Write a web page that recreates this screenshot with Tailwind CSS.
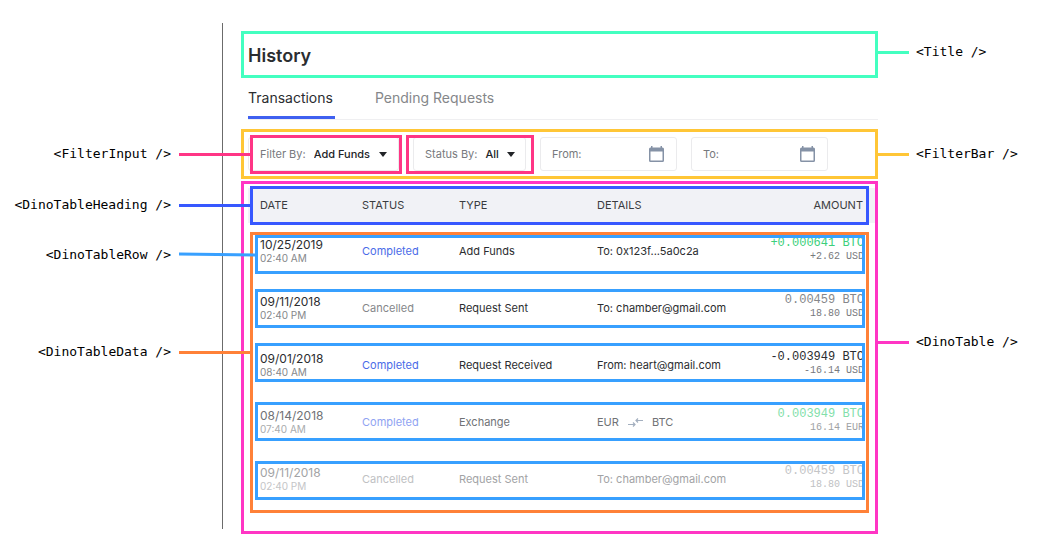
<!DOCTYPE html>
<html lang="en">
<head>
<meta charset="utf-8">
<meta name="viewport" content="width=device-width, initial-scale=1">
<title>History</title>
<script src="https://cdn.jsdelivr.net/npm/@tailwindcss/browser@4"></script>
</head>
<body class="flex bg-white font-['Inter',sans-serif] text-[11px] leading-[13px] text-[#2b2d30]">

  <!-- Left component labels -->
  <aside class="flex w-[222px] shrink-0 flex-col items-end pt-[144px] pr-[51px] font-['DejaVu_Sans_Mono',monospace] text-[13px] leading-5 text-black">
    <div class="relative">&lt;FilterInput /&gt;<span class="absolute top-[9px] left-full z-20 ml-2 h-[3px] w-[71px] bg-[#ff3585]"></span></div>
    <div class="relative mt-[31px]">&lt;DinoTableHeading /&gt;<span class="absolute top-[9px] left-full z-20 ml-2 h-[3px] w-[71px] bg-[#3758ff]"></span></div>
    <div class="relative mt-[30px]">&lt;DinoTableRow /&gt;<svg class="absolute top-[7px] left-full z-20 ml-2 h-[5px] w-[76px]" viewBox="0 0 76 5"><path d="M0 2L76 3" stroke="#38a0ff" stroke-width="3"/></svg></div>
    <div class="relative mt-[77px]">&lt;DinoTableData /&gt;<span class="absolute top-[9px] left-full z-20 ml-2 h-[3px] w-[71px] bg-[#ff8138]"></span></div>
  </aside>

  <div class="mt-[23px] mb-[5px] w-px shrink-0 bg-[#6b6b6b]"></div>

  <main class="ml-[18px] min-w-0 flex-1 pt-[31px]">
    <header class="flex h-[47px] items-center border-3 border-[#43ffc0] pt-[2px] pl-1">
      <h1 class="text-[18px] leading-6 font-semibold">History</h1>
    </header>

    <nav class="ml-[7px] flex h-[42px] gap-10 border-b border-[#efeff1] text-[14px] leading-5">
      <a href="#transactions" class="h-[41px] w-[87px] border-b-3 border-[#3f60f0] pt-[10px]">Transactions</a>
      <a href="#pending" class="pt-[10px] text-[#85878a]">Pending Requests</a>
    </nav>

    <form class="mt-[9px] flex h-[50px] items-center gap-[14px] border-3 border-[#ffc636] pl-1 text-[#77797d]">
      <div class="relative flex h-[34px] w-[151px] items-center rounded-[3px] border border-[#ebebed] pl-[11px]">
        <label for="filter">Filter By:</label>
        <select id="filter" class="ml-2 appearance-none font-medium text-[#222428]"><option>Add Funds</option></select>
        <svg class="ml-2 h-[5px] w-2" viewBox="0 0 8 5" fill="#222428"><path d="M0 0h8L4 5z"/></svg>
        <span class="pointer-events-none absolute -top-[3px] -right-1 -bottom-1 left-px border-3 border-[#ff3585]"></span>
      </div>
      <div class="relative flex h-[34px] w-[113px] items-center rounded-[3px] border border-[#ebebed] pl-[11px]">
        <label for="status">Status By:</label>
        <select id="status" class="ml-2 appearance-none font-medium text-[#222428]"><option>All</option></select>
        <svg class="ml-2 h-[5px] w-2" viewBox="0 0 8 5" fill="#222428"><path d="M0 0h8L4 5z"/></svg>
        <span class="pointer-events-none absolute -top-[3px] -right-[9px] -bottom-1 -left-2 border-3 border-[#ff3585]"></span>
      </div>
      <div class="flex h-[34px] w-[137px] items-center rounded-[3px] border border-[#ebebed] pr-[12px] pl-[11px]">
        <label for="from">From:</label>
        <input id="from" type="text" class="min-w-0 flex-1 outline-none">
        <svg class="h-4 w-[15px]" viewBox="0 0 15 16" fill="#8592a6"><path fill-rule="evenodd" d="M1.500 1.500h12a1.500 1.500 0 0 1 1.500 1.500v11.500a1.500 1.500 0 0 1-1.500 1.500h-12A1.500 1.500 0 0 1 0 14.500V3a1.500 1.500 0 0 1 1.500-1.500zM1.500 5.500v9h12v-9z"/><path d="M2 0h1.500v2H2zM11.500 0H13v2h-1.500z"/></svg>
      </div>
      <div class="flex h-[34px] w-[137px] items-center rounded-[3px] border border-[#ebebed] pr-[12px] pl-[11px]">
        <label for="to">To:</label>
        <input id="to" type="text" class="min-w-0 flex-1 outline-none">
        <svg class="h-4 w-[15px]" viewBox="0 0 15 16" fill="#8592a6"><path fill-rule="evenodd" d="M1.500 1.500h12a1.500 1.500 0 0 1 1.500 1.500v11.500a1.500 1.500 0 0 1-1.500 1.500h-12A1.500 1.500 0 0 1 0 14.500V3a1.500 1.500 0 0 1 1.500-1.500zM1.500 5.500v9h12v-9z"/><path d="M2 0h1.500v2H2zM11.500 0H13v2h-1.500z"/></svg>
      </div>
    </form>

    <section class="mt-[2px] border-3 border-[#ff35c4] pt-1 pb-[23px] pl-1">
      <div class="relative">
        <table class="w-full table-fixed text-left">
          <colgroup><col class="w-[104px]"><col class="w-[97px]"><col class="w-[138px]"><col class="w-[160px]"><col></colgroup>
          <thead>
            <tr class="relative h-[35px] bg-[#f1f2f6] text-[#3a3c40]">
              <th class="pl-3 font-normal">DATE<span class="absolute -top-[2px] right-[6px] -bottom-[2px] left-[2px] border-3 border-[#3758ff]"></span></th>
              <th class="pl-[10px] font-normal">STATUS</th>
              <th class="pl-[10px] font-normal">TYPE</th>
              <th class="pl-[10px] font-normal">DETAILS</th>
              <th class="pr-3 text-right font-normal">AMOUNT</th>
            </tr>
          </thead>
          <tbody>
            <tr class="relative h-[57px]">
              <td class="pl-3"><span class="text-[12px]">10/25/2019</span><br><span class="text-[10px] text-[#85878a]">02:40 AM</span><span class="absolute top-3 right-[10px] left-[7px] z-10 h-[39px] border-3 border-[#38a0ff]"></span></td>
              <td class="pl-[10px] text-[#4a6be8]">Completed</td>
              <td class="pl-[10px]">Add Funds</td>
              <td class="pl-[10px]">To: 0x123f...5a0c2a</td>
              <td class="pr-[11px] pb-1 text-right font-['Liberation_Mono',monospace] text-[12px] whitespace-nowrap text-[#3ccf7b]">+0.000641 BTC<br><span class="text-[10px] text-[#77797d]">+2.62 USD</span></td>
            </tr>
            <tr class="relative h-[57px]">
              <td class="pl-3"><span class="text-[12px]">09/11/2018</span><br><span class="text-[10px] text-[#85878a]">02:40 PM</span><span class="absolute top-[9px] right-[10px] left-[7px] z-10 h-[39px] border-3 border-[#38a0ff]"></span></td>
              <td class="pl-[10px] text-[#85878a]">Cancelled</td>
              <td class="pl-[10px]">Request Sent</td>
              <td class="pl-[10px]">To: chamber@gmail.com</td>
              <td class="pr-[11px] pb-1 text-right font-['Liberation_Mono',monospace] text-[12px] whitespace-nowrap text-[#85878a]">0.00459 BTC<br><span class="text-[10px] text-[#77797d]">18.80 USD</span></td>
            </tr>
            <tr class="relative h-[57px]">
              <td class="pl-3"><span class="text-[12px]">09/01/2018</span><br><span class="text-[10px] text-[#85878a]">08:40 AM</span><span class="absolute top-[6px] right-[10px] left-[7px] z-10 h-[39px] border-3 border-[#38a0ff]"></span></td>
              <td class="pl-[10px] text-[#4a6be8]">Completed</td>
              <td class="pl-[10px]">Request Received</td>
              <td class="pl-[10px]">From: heart@gmail.com</td>
              <td class="pr-[11px] pb-1 text-right font-['Liberation_Mono',monospace] text-[12px] whitespace-nowrap">-0.003949 BTC<br><span class="text-[10px] text-[#77797d]">-16.14 USD</span></td>
            </tr>
            <tr class="relative h-[57px] text-[#707275]">
              <td class="pl-3"><span class="text-[12px]">08/14/2018</span><br><span class="text-[10px] text-[#a9abad]">07:40 AM</span><span class="absolute top-2 right-[10px] left-[7px] z-10 h-[39px] border-3 border-[#38a0ff]"></span></td>
              <td class="pl-[10px] text-[#8fa3f2]">Completed</td>
              <td class="pl-[10px]">Exchange</td>
              <td class="pl-[10px]"><span class="flex items-center gap-[9px]">EUR <svg class="h-[9px] w-[15px]" viewBox="0 0 15 9" fill="none" stroke="#a3afbf" stroke-width="1.200"><path d="M0 6.500H7M5 4.500L7 6.500L5 8.500M15 2.500H8M10 .5L8 2.500L10 4.500"/></svg> BTC</span></td>
              <td class="pr-[11px] pb-1 text-right font-['Liberation_Mono',monospace] text-[12px] whitespace-nowrap text-[#82e0aa]">0.003949 BTC<br><span class="text-[10px] text-[#a0a2a4]">16.14 EUR</span></td>
            </tr>
            <tr class="relative h-[57px] text-[#a2a3a5]">
              <td class="pl-3"><span class="text-[12px]">09/11/2018</span><br><span class="text-[10px] text-[#c4c5c7]">02:40 PM</span><span class="absolute top-[10px] right-[10px] left-[7px] z-10 h-[39px] border-3 border-[#38a0ff]"></span></td>
              <td class="pl-[10px] text-[#c0c1c3]">Cancelled</td>
              <td class="pl-[10px]">Request Sent</td>
              <td class="pl-[10px]">To: chamber@gmail.com</td>
              <td class="pr-[11px] pb-1 text-right font-['Liberation_Mono',monospace] text-[12px] whitespace-nowrap text-[#c4c5c7]">0.00459 BTC<br><span class="text-[10px] text-[#c0c1c3]">18.80 USD</span></td>
            </tr>
          </tbody>
        </table>
        <div class="pointer-events-none absolute top-11 right-[6px] -bottom-[5px] left-[2px] border-3 border-[#ff8138]"></div>
      </div>
    </section>
  </main>

  <!-- Right component labels -->
  <aside class="w-40 shrink-0 pt-[42px] pl-[38px] font-['DejaVu_Sans_Mono',monospace] text-[13px] leading-5 text-black">
    <div class="relative">&lt;Title /&gt;<span class="absolute top-[9px] right-full mr-[7px] h-[3px] w-[31px] bg-[#43ffc0]"></span></div>
    <div class="relative mt-[82px]">&lt;FilterBar /&gt;<span class="absolute top-[9px] right-full mr-[7px] h-[3px] w-[31px] bg-[#ffc636]"></span></div>
    <div class="relative mt-[168px]">&lt;DinoTable /&gt;<span class="absolute top-[9px] right-full mr-[7px] h-[3px] w-[31px] bg-[#ff35c4]"></span></div>
  </aside>
</body>
</html>
